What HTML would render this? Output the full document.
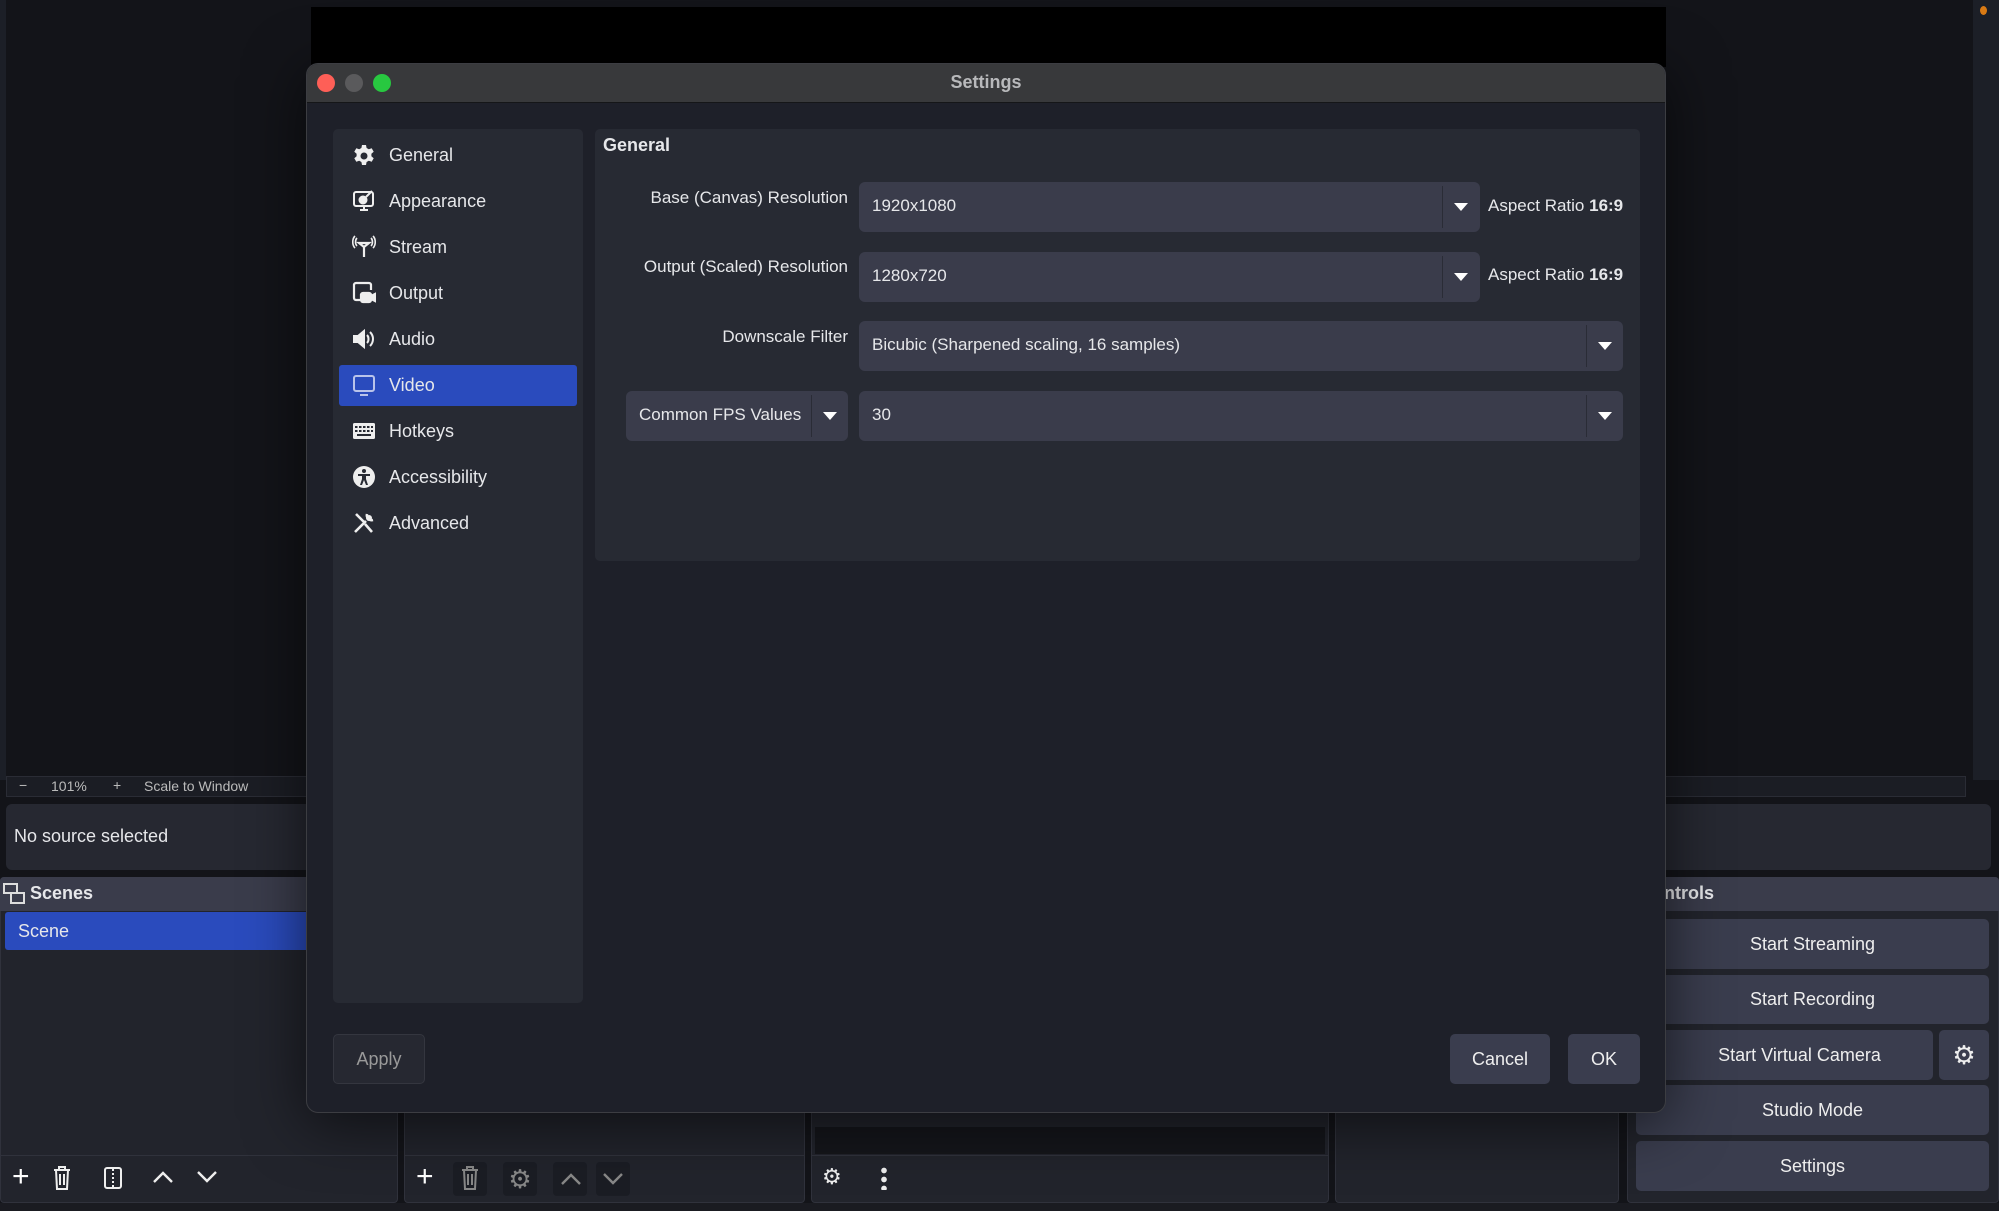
<!DOCTYPE html>
<html><head><meta charset="utf-8"><style>
*{box-sizing:border-box;margin:0;padding:0}
body{width:1999px;height:1211px;background:#131419;position:relative;overflow:hidden;font-family:"Liberation Sans",sans-serif;color:#e6e7ea;font-size:18px}
.a{position:absolute}
.combo{position:absolute;background:#3a3c4b;border-radius:6px;height:50px}
.combo .t{position:absolute;left:13px;top:14px;font-size:17px}
.combo .d{position:absolute;top:4px;bottom:4px;width:1px;background:#2a2c36}
.combo .arr{position:absolute;top:21px;width:0;height:0;border-left:7px solid transparent;border-right:7px solid transparent;border-top:8px solid #fff}
.lbl{position:absolute;right:1151px;font-size:17px;text-align:right;white-space:nowrap}
.side{position:absolute;left:389px;font-size:18px}
.ic{position:absolute;left:352px;width:24px;height:24px}
.btn{position:absolute;background:#3a3d4e;border-radius:5px;text-align:center;font-size:18px;color:#eee}
.dock{position:absolute;background:#22242c;border:1px solid #30323c;border-radius:4px}
</style></head><body>
<!-- main window background -->
<div class="a" style="left:0;top:0;width:6px;height:780px;background:#1c1f27"></div>
<div class="a" style="left:311px;top:7px;width:1355px;height:60px;background:#000"></div>
<div class="a" style="left:1973px;top:0;width:26px;height:780px;background:#1c1f27"></div>
<div class="a" style="left:1980px;top:6px;width:7px;height:9px;border-radius:50%;background:#d97a14"></div>
<!-- zoom bar -->
<div class="a" style="left:6px;top:776px;width:1960px;height:21px;background:#1b1d24;border:1px solid #2a2c35;font-size:14px;color:#bbb">
<span class="a" style="left:12px;top:0">−</span><span class="a" style="left:44px;top:1px">101%</span><span class="a" style="left:106px;top:0">+</span><span class="a" style="left:137px;top:1px">Scale to Window</span></div>
<!-- no source -->
<div class="a" style="left:6px;top:804px;width:1985px;height:66px;background:#262831;border-radius:6px"><span class="a" style="left:8px;top:22px;font-size:18px">No source selected</span></div>
<!-- scenes dock -->
<div class="dock" style="left:0;top:877px;width:398px;height:326px"></div>
<div class="a" style="left:0;top:877px;width:398px;height:34px;background:#3a3c4b;border-radius:4px 4px 0 0"></div>
<svg class="a" style="left:3px;top:883px" width="22" height="22" viewBox="0 0 22 22" fill="none" stroke="#ddd" stroke-width="2"><rect x="1" y="1" width="13" height="9"/><rect x="8" y="10" width="13" height="10"/></svg>
<div class="a" style="left:30px;top:883px;font-weight:bold;font-size:18px">Scenes</div>
<div class="a" style="left:5px;top:912px;width:393px;height:38px;background:#2a4bbd;border-radius:3px"><span class="a" style="left:13px;top:9px;font-size:18px">Scene</span></div>
<div class="a" style="left:0;top:1155px;width:398px;height:1px;background:#30323c"></div>
<div class="a" style="left:12px;top:1160px;font-size:30px;color:#fff">+</div>
<svg class="a" style="left:53px;top:1166px" width="18" height="24" viewBox="0 0 18 24" fill="none" stroke="#eee" stroke-width="2"><path d="M1 4h16M6 4V1h6v3M3 4l1 19h10l1-19M7 8v11M11 8v11"/></svg>
<svg class="a" style="left:104px;top:1167px" width="18" height="22" viewBox="0 0 18 22" fill="none" stroke="#eee" stroke-width="2"><rect x="1" y="1" width="16" height="20" rx="2"/><path d="M9 2v18" stroke-dasharray="2 2"/></svg>
<svg class="a" style="left:152px;top:1170px" width="22" height="14" viewBox="0 0 22 14" fill="none" stroke="#eee" stroke-width="2.4"><path d="M2 12L11 3l9 9"/></svg>
<svg class="a" style="left:196px;top:1170px" width="22" height="14" viewBox="0 0 22 14" fill="none" stroke="#eee" stroke-width="2.4"><path d="M2 2l9 9 9-9"/></svg>
<!-- sources dock -->
<div class="dock" style="left:404px;top:1060px;width:401px;height:143px"></div>
<div class="a" style="left:404px;top:1155px;width:401px;height:1px;background:#30323c"></div>
<div class="a" style="left:416px;top:1160px;font-size:30px;color:#fff">+</div>
<div class="a" style="left:453px;top:1162px;width:34px;height:34px;background:#1b1d24;border-radius:4px"></div>
<svg class="a" style="left:461px;top:1166px" width="18" height="24" viewBox="0 0 18 24" fill="none" stroke="#888" stroke-width="2"><path d="M1 4h16M6 4V1h6v3M3 4l1 19h10l1-19M7 8v11M11 8v11"/></svg>
<div class="a" style="left:503px;top:1162px;width:34px;height:34px;background:#1b1d24;border-radius:4px;color:#888;font-size:26px;text-align:center;line-height:34px">⚙</div>
<div class="a" style="left:553px;top:1162px;width:34px;height:34px;background:#1b1d24;border-radius:4px"></div>
<div class="a" style="left:596px;top:1162px;width:34px;height:34px;background:#1b1d24;border-radius:4px"></div>
<svg class="a" style="left:560px;top:1172px" width="22" height="14" viewBox="0 0 22 14" fill="none" stroke="#888" stroke-width="2.4"><path d="M2 12L11 3l9 9"/></svg>
<svg class="a" style="left:602px;top:1172px" width="22" height="14" viewBox="0 0 22 14" fill="none" stroke="#888" stroke-width="2.4"><path d="M2 2l9 9 9-9"/></svg>
<!-- mixer dock -->
<div class="dock" style="left:811px;top:1060px;width:518px;height:143px"></div>
<div class="a" style="left:815px;top:1127px;width:510px;height:27px;background:#15161b"></div>
<div class="a" style="left:811px;top:1155px;width:518px;height:1px;background:#30323c"></div>
<div class="a" style="left:822px;top:1164px;font-size:22px;color:#eee">⚙</div>
<div class="a" style="left:881px;top:1166px;width:6px;height:24px;background:radial-gradient(circle,#eee 2.6px,transparent 3px) 0 0/6px 9px"></div>
<!-- transitions -->
<div class="dock" style="left:1335px;top:1060px;width:284px;height:143px"></div>
<!-- controls dock -->
<div class="dock" style="left:1627px;top:877px;width:372px;height:326px"></div>
<div class="a" style="left:1627px;top:877px;width:372px;height:34px;background:#3a3c4b;border-radius:4px 4px 0 0"></div>
<div class="a" style="left:1640px;top:883px;font-weight:bold;font-size:18px">Controls</div>
<div class="btn" style="left:1636px;top:919px;width:353px;height:50px;line-height:50px">Start Streaming</div>
<div class="btn" style="left:1636px;top:975px;width:353px;height:49px;line-height:49px">Start Recording</div>
<div class="btn" style="left:1636px;top:1030px;width:297px;height:50px;line-height:50px;padding-left:30px">Start Virtual Camera</div>
<div class="btn" style="left:1939px;top:1030px;width:50px;height:50px;line-height:50px;font-size:26px">⚙</div>
<div class="btn" style="left:1636px;top:1085px;width:353px;height:50px;line-height:50px">Studio Mode</div>
<div class="btn" style="left:1636px;top:1141px;width:353px;height:50px;line-height:50px">Settings</div>
<div class="a" style="left:0;top:1203px;width:1999px;height:8px;background:#1a1b21"></div>

<!-- dialog -->
<div class="a" style="left:306px;top:63px;width:1360px;height:1050px;background:#1e2029;border:1px solid #3c3d42;border-radius:12px;box-shadow:0 10px 60px rgba(0,0,0,.6);overflow:hidden">
<div class="a" style="left:0;top:0;width:100%;height:39px;background:#38393b;border-bottom:1px solid #151618"></div>
<div class="a" style="left:10px;top:10px;width:18px;height:18px;border-radius:50%;background:#fe5f57"></div>
<div class="a" style="left:38px;top:10px;width:18px;height:18px;border-radius:50%;background:#5a5a5c"></div>
<div class="a" style="left:66px;top:10px;width:18px;height:18px;border-radius:50%;background:#28c840"></div>
<div class="a" style="left:0;top:8px;width:100%;text-align:center;font-weight:bold;font-size:18px;color:#b8b9bb">Settings</div>
</div>
<!-- sidebar -->
<div class="a" style="left:333px;top:129px;width:250px;height:874px;background:#272a33;border-radius:5px"></div>
<div class="a" style="left:339px;top:365px;width:238px;height:41px;background:#2a4bbd;border-radius:3px"></div>
<svg class="ic" style="top:144px" viewBox="0 0 24 24"><path fill="#eee" fill-rule="evenodd" d="M10 1h4l.6 3 2.2 1.3 2.9-1 2 3.4-2.3 2v2.6l2.3 2-2 3.4-2.9-1-2.2 1.3-.6 3h-4l-.6-3-2.2-1.3-2.9 1-2-3.4 2.3-2v-2.6l-2.3-2 2-3.4 2.9 1L9.4 4zM12 8.5a3.5 3.5 0 100 7 3.5 3.5 0 000-7z"/></svg>
<div class="side" style="top:145px">General</div>
<svg class="ic" style="top:189px" viewBox="0 0 24 24" fill="none" stroke="#eee" stroke-width="2"><rect x="2" y="3" width="19" height="14" rx="2"/><path d="M8 21h8M12 17v4"/><circle cx="11" cy="11" r="3.5" fill="#eee"/><path d="M14 8l6-6"/></svg>
<div class="side" style="top:191px">Appearance</div>
<svg class="ic" style="top:235px" viewBox="0 0 24 24" fill="none" stroke="#eee" stroke-width="1.6"><path d="M7 8h10l-5 4zM12 12v10" stroke-width="2.2"/><path d="M5 3c-2 2-2 6 0 8M3 1c-3 3-3 9 0 12M19 3c2 2 2 6 0 8M21 1c3 3 3 9 0 12"/></svg>
<div class="side" style="top:237px">Stream</div>
<svg class="ic" style="top:281px" viewBox="0 0 24 24" fill="none" stroke="#eee" stroke-width="2.2"><path d="M8 19H4a2 2 0 01-2-2V4a2 2 0 012-2h13a2 2 0 012 2v5"/><rect x="9" y="12" width="10" height="9" rx="2" fill="#eee"/><path d="M19 15l4-2v7l-4-2z" fill="#eee"/></svg>
<div class="side" style="top:283px">Output</div>
<svg class="ic" style="top:327px" viewBox="0 0 24 24" fill="none" stroke="#eee" stroke-width="2"><path d="M2 9h4l6-5v16l-6-5H2z" fill="#eee"/><path d="M15 8c2 2 2 6 0 8M18 5c4 4 4 10 0 14"/></svg>
<div class="side" style="top:329px">Audio</div>
<svg class="ic" style="top:373px" viewBox="0 0 24 24" fill="none" stroke="#b9c3ea" stroke-width="2"><rect x="2" y="3" width="20" height="15" rx="2"/><path d="M8 22h8"/></svg>
<div class="side" style="top:375px">Video</div>
<svg class="ic" style="top:419px" viewBox="0 0 24 24"><rect x="1" y="4" width="22" height="16" rx="1.5" fill="#eee"/><g fill="#272a33"><rect x="3" y="7" width="2.5" height="2"/><rect x="7" y="7" width="2.5" height="2"/><rect x="11" y="7" width="2.5" height="2"/><rect x="15" y="7" width="2.5" height="2"/><rect x="19" y="7" width="2" height="2"/><rect x="3" y="11" width="2.5" height="2"/><rect x="7" y="11" width="2.5" height="2"/><rect x="11" y="11" width="2.5" height="2"/><rect x="15" y="11" width="2.5" height="2"/><rect x="19" y="11" width="2" height="2"/><rect x="5" y="15" width="14" height="2"/></g></svg>
<div class="side" style="top:421px">Hotkeys</div>
<svg class="ic" style="top:465px" viewBox="0 0 24 24"><circle cx="12" cy="12" r="11" fill="#eee"/><g fill="#272a33"><circle cx="12" cy="6" r="2"/><path d="M6 9h12v2h-4v3l2 6h-2l-2-5-2 5H8l2-6v-3H6z"/></g></svg>
<div class="side" style="top:467px">Accessibility</div>
<svg class="ic" style="top:511px" viewBox="0 0 24 24" fill="none" stroke="#eee" stroke-width="2.6"><path d="M3 21L14 10M15 3a5 5 0 006 6M4 3l8 8M13 13l7 8"/><circle cx="17" cy="7" r="3" fill="#eee" stroke="none"/></svg>
<div class="side" style="top:513px">Advanced</div>

<!-- content panel -->
<div class="a" style="left:595px;top:129px;width:1045px;height:432px;background:#272a33;border-radius:5px"></div>
<div class="a" style="left:603px;top:135px;font-weight:bold;font-size:18px">General</div>
<div class="lbl" style="top:188px">Base (Canvas) Resolution</div>
<div class="lbl" style="top:257px">Output (Scaled) Resolution</div>
<div class="lbl" style="top:327px">Downscale Filter</div>
<div class="combo" style="left:859px;top:182px;width:621px"><span class="t">1920x1080</span><span class="d" style="left:583px"></span><span class="arr" style="left:595px"></span></div>
<div class="combo" style="left:859px;top:252px;width:621px"><span class="t">1280x720</span><span class="d" style="left:583px"></span><span class="arr" style="left:595px"></span></div>
<div class="a" style="left:1488px;top:196px;font-size:17px">Aspect Ratio <b>16:9</b></div>
<div class="a" style="left:1488px;top:265px;font-size:17px">Aspect Ratio <b>16:9</b></div>
<div class="combo" style="left:859px;top:321px;width:764px"><span class="t">Bicubic (Sharpened scaling, 16 samples)</span><span class="d" style="left:727px"></span><span class="arr" style="left:739px"></span></div>
<div class="combo" style="left:626px;top:391px;width:222px"><span class="t">Common FPS Values</span><span class="d" style="left:185px"></span><span class="arr" style="left:197px"></span></div>
<div class="combo" style="left:859px;top:391px;width:764px"><span class="t">30</span><span class="d" style="left:727px"></span><span class="arr" style="left:739px"></span></div>

<!-- dialog buttons -->
<div class="btn" style="left:333px;top:1034px;width:92px;height:50px;line-height:48px;background:#262831;border:1px solid #34363f;color:#999">Apply</div>
<div class="btn" style="left:1450px;top:1034px;width:100px;height:50px;line-height:50px">Cancel</div>
<div class="btn" style="left:1568px;top:1034px;width:72px;height:50px;line-height:50px">OK</div>
</body></html>
